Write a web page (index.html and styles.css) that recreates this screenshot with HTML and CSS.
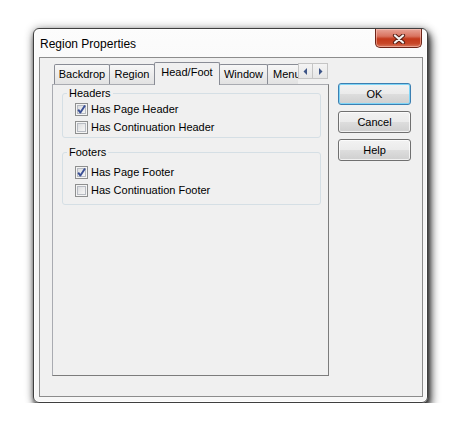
FILE: index.html
```html
<!DOCTYPE html>
<html>
<head>
<meta charset="utf-8">
<title>Region Properties</title>
<link rel="stylesheet" href="styles.css">
</head>
<body>
<div class="window">
  <div class="titlebar">
    <span class="title">Region Properties</span>
    <button class="close" aria-label="Close">
      <svg width="14" height="10" viewBox="0 0 14 10">
        <path d="M3 1.5 L11 8.5 M11 1.5 L3 8.5" stroke="#5b2116" stroke-width="4.2" stroke-linecap="round" fill="none"/>
        <path d="M3 1.5 L11 8.5 M11 1.5 L3 8.5" stroke="#f4f4f4" stroke-width="2.2" stroke-linecap="round" fill="none"/>
      </svg>
    </button>
  </div>
  <div class="client">
    <div class="left">
      <div class="tabstrip">
        <div class="tabs">
          <div class="tab w-backdrop">Backdrop</div>
          <div class="tab w-region">Region</div>
          <div class="tab w-headfoot selected">Head/Foot</div>
          <div class="tab w-window">Window</div>
          <div class="tab w-menu">Menu</div>
        </div>
        <div class="scroller">
          <span class="arrow"><svg width="5" height="7" viewBox="0 0 5 7"><path d="M4 0 L0.5 3.5 L4 7 Z" fill="#3d5587"/></svg></span>
          <span class="arrow"><svg width="5" height="7" viewBox="0 0 5 7"><path d="M1 0 L4.5 3.5 L1 7 Z" fill="#3d5587"/></svg></span>
        </div>
      </div>
      <div class="panel">
        <fieldset class="group group-headers">
          <legend>Headers</legend>
          <label class="check"><span class="box"><svg width="13" height="13" viewBox="0 0 13 13"><path d="M3.2 6.6 L5.4 9.6 L10 2.6" stroke="#3a4f95" stroke-width="1.9" fill="none" stroke-linejoin="round"/></svg></span>Has Page Header</label>
          <label class="check"><span class="box"></span>Has Continuation Header</label>
        </fieldset>
        <fieldset class="group group-footers">
          <legend>Footers</legend>
          <label class="check"><span class="box"><svg width="13" height="13" viewBox="0 0 13 13"><path d="M3.2 6.6 L5.4 9.6 L10 2.6" stroke="#3a4f95" stroke-width="1.9" fill="none" stroke-linejoin="round"/></svg></span>Has Page Footer</label>
          <label class="check"><span class="box"></span>Has Continuation Footer</label>
        </fieldset>
      </div>
    </div>
    <div class="buttons">
      <button class="btn default">OK</button>
      <button class="btn">Cancel</button>
      <button class="btn">Help</button>
    </div>
  </div>
</div>
</body>
</html>
```
FILE: styles.css
```css
html, body {
  margin: 0;
  padding: 0;
  background: #ffffff;
}

body {
  font-family: "Liberation Sans", Arial, sans-serif;
  font-size: 11px;
  color: #000;
}

.window {
  margin: 28px 0 0 33px;
  width: 395px;
  height: 375px;
  box-sizing: border-box;
  border: 1px solid #3f3f3f;
  border-radius: 6px;
  background: linear-gradient(to bottom, #fcfcfc 0%, #f4f4f4 30%, #f7f7f7 100%);
  box-shadow: inset 0 0 0 1px #ffffff, 3px 6px 10px rgba(0, 0, 0, 0.7), 1px 3px 4px rgba(0, 0, 0, 0.5), 0 0 10px rgba(0, 0, 0, 0.3);
  display: flex;
  flex-direction: column;
}

.titlebar {
  height: 28px;
  display: flex;
  align-items: flex-start;
  flex: none;
}

.title {
  font-size: 12px;
  margin: 8px 0 0 6px;
  line-height: 15px;
  text-shadow: 0 0 6px #ffffff, 0 0 3px #ffffff;
}

.close {
  margin: 0 5px 0 auto;
  width: 47px;
  height: 19px;
  padding: 0;
  border: 1px solid #6d2418;
  border-top: none;
  border-radius: 0 0 5px 5px;
  background: linear-gradient(to bottom, #e8a497 0%, #d9735f 40%, #c3391b 55%, #c84728 80%, #d8785e 100%);
  box-shadow: inset 0 0 0 1px rgba(255, 210, 200, 0.5);
  display: flex;
  align-items: center;
  justify-content: center;
}

.close svg {
  display: block;
  margin-top: 1px;
}

.client {
  flex: 1;
  margin: 0 4px 5px 5px;
  border: 1px solid #8c8c8c;
  background: #f0f0f0;
  display: flex;
  padding: 4px 0 0 12px;
}

.left {
  width: 277px;
  display: flex;
  flex-direction: column;
  flex: none;
}

.tabstrip {
  height: 23px;
  margin-bottom: -1px;
  display: flex;
  position: relative;
  z-index: 1;
}

.tabs {
  width: 246px;
  overflow: hidden;
  display: flex;
  align-items: flex-end;
  padding-left: 2px;
  box-sizing: border-box;
  flex: none;
}

.tab {
  flex: none;
  box-sizing: border-box;
  height: 20px;
  margin-bottom: 1px;
  margin-right: -1px;
  border: 1px solid #898c95;
  border-bottom: none;
  border-radius: 2px 2px 0 0;
  background: linear-gradient(to bottom, #f7f7f7 0%, #ececec 50%, #e2e2e2 100%);
  text-align: center;
  line-height: 19px;
  white-space: nowrap;
  overflow: hidden;
}

.tab.selected {
  height: 23px;
  margin-bottom: 0;
  background: #f0f0f0;
  border-color: #898c95;
  line-height: 19px;
  position: relative;
  z-index: 2;
}

.w-backdrop { width: 56px; }
.w-region { width: 46px; }
.w-headfoot { width: 66px; }
.w-window { width: 49px; }
.w-menu { width: 46px; text-align: left; padding-left: 5px; }

.scroller {
  display: flex;
  margin-top: 1px;
  height: 16px;
  flex: none;
}

.arrow {
  width: 15px;
  height: 16px;
  box-sizing: border-box;
  border: 1px solid #c5c5c5;
  background: linear-gradient(to bottom, #f4f4f4, #e6e6e6);
  display: flex;
  align-items: center;
  justify-content: center;
}

.arrow + .arrow {
  border-left: none;
  width: 15px;
}

.panel {
  height: 292px;
  box-sizing: border-box;
  border: 1px solid;
  border-color: #a9abb1 #7c7c7c #7c7c7c #a9abb1;
  background: #f0f0f0;
  padding: 1px 7px 0 9px;
}

.group {
  margin: 0;
  border: 1px solid #d5dfe5;
  border-radius: 3px;
  padding: 0 0 1px 12px;
  min-inline-size: 0;
}

.group legend {
  padding: 0 2px;
  margin-left: -8px;
  line-height: 14px;
}

.group-footers {
  margin-top: 7px;
  padding-top: 4px;
  padding-bottom: 5px;
}

.check {
  display: flex;
  align-items: center;
  height: 18px;
  white-space: nowrap;
}

.box {
  width: 13px;
  height: 13px;
  box-sizing: border-box;
  border: 1px solid #8e8f8f;
  background: linear-gradient(135deg, #d4d6da 0%, #eeeeee 60%, #fbfbfb 100%);
  box-shadow: inset 0 0 0 1px #f4f4f4, inset 0 0 0 2px #b7bbc2;
  margin-right: 3px;
  position: relative;
  flex: none;
}

.box svg {
  position: absolute;
  left: -1px;
  top: -1px;
}

.buttons {
  margin-left: 9px;
  padding-top: 21px;
  display: flex;
  flex-direction: column;
  gap: 6px;
}

.btn {
  width: 73px;
  height: 22px;
  box-sizing: border-box;
  padding: 0;
  font-family: "Liberation Sans", Arial, sans-serif;
  font-size: 11px;
  color: #000;
  border: 1px solid #707070;
  border-radius: 3px;
  background: linear-gradient(to bottom, #f2f2f2 0%, #ebebeb 48%, #dddddd 52%, #cfcfcf 100%);
  box-shadow: inset 0 0 0 1px rgba(255, 255, 255, 0.7);
}

.btn.default {
  border-color: #3c7fb1;
  box-shadow: inset 0 0 0 1px #7fd5f7;
}
```
